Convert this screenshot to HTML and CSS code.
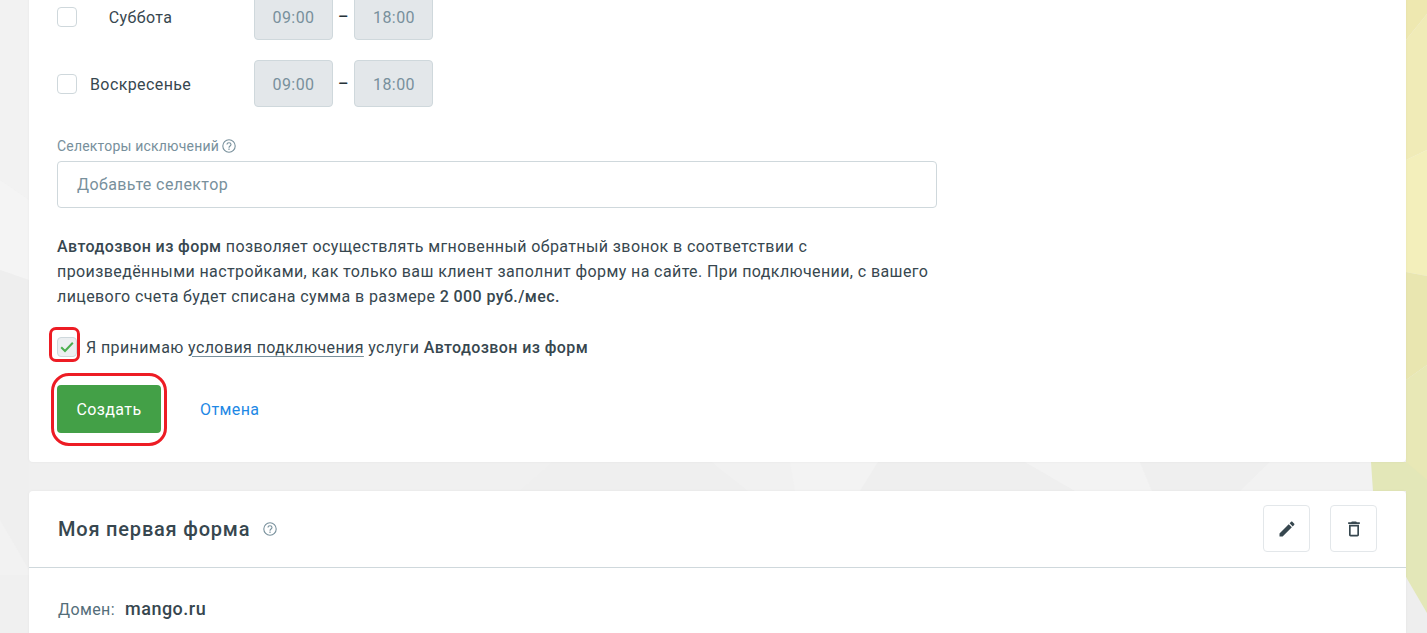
FILE: index.html
```html
<!DOCTYPE html>
<html lang="ru">
<head>
<meta charset="utf-8">
<title>Автодозвон из форм</title>
<link rel="stylesheet" href="styles.css">
</head>
<body>
<svg class="backdrop" viewBox="0 0 1427 633" preserveAspectRatio="none" aria-hidden="true">
  <rect width="1427" height="633" fill="#f1f1f1"/>
  <polygon points="0,0 29,0 29,200 0,180" fill="#f2f2f2"/>
  <polygon points="0,180 29,200 29,280 0,270" fill="#f4f4f4"/>
  <polygon points="0,270 29,280 29,450 0,450" fill="#eeeeee"/>
  <polygon points="0,450 29,450 29,570 0,520" fill="#efefef"/>
  <polygon points="0,520 29,570 29,633 0,633" fill="#f2f2f2"/>
  <polygon points="0,575 29,575 29,633 0,633" fill="#f0f0f0"/>
  <polygon points="29,462 560,462 520,491 29,491" fill="#f0f0f0"/>
  <polygon points="553,462 712,462 748,491 520,491" fill="#efefef"/>
  <polygon points="712,462 790,462 795,491 748,491" fill="#f1f1f1"/>
  <polygon points="790,462 878,462 860,491 795,491" fill="#f3f3f3"/>
  <polygon points="878,462 1025,462 1075,491 860,491" fill="#efefef"/>
  <polygon points="1025,462 1140,462 1152,491 1075,491" fill="#f3f3f3"/>
  <polygon points="1140,462 1270,462 1240,491 1152,491" fill="#efefef"/>
  <polygon points="1270,462 1372,462 1372,491 1240,491" fill="#f2f2f2"/>
  <polygon points="1371,462 1427,462 1427,633 1406,577 1406,491 1373,491" fill="#e3e7b8"/>
  <polygon points="1406,0 1427,0 1427,14 1406,40" fill="#eee8b0"/>
  <polygon points="1406,40 1427,14 1427,150 1406,160" fill="#f0ebb7"/>
  <polygon points="1406,160 1427,150 1427,276 1406,272" fill="#f3efbb"/>
  <polygon points="1406,272 1427,276 1427,365 1406,380" fill="#e9e6b0"/>
  <polygon points="1406,380 1427,365 1427,480 1406,462" fill="#e8e8b6"/>
  <polygon points="1406,577 1427,613 1427,633 1406,633" fill="#eeeeee"/>
</svg>

<main class="page">
  <section class="card card-form">
    <div class="day-row">
      <span class="checkbox"></span>
      <span class="day-name">Суббота</span>
      <span class="time">09:00</span>
      <span class="dash">–</span>
      <span class="time">18:00</span>
    </div>
    <div class="day-row">
      <span class="checkbox"></span>
      <span class="day-name">Воскресенье</span>
      <span class="time">09:00</span>
      <span class="dash">–</span>
      <span class="time">18:00</span>
    </div>

    <div class="field">
      <div class="field-label">Селекторы исключений
        <svg class="help" viewBox="0 0 14 14" aria-hidden="true">
          <circle cx="7" cy="7" r="6.2"/>
          <path d="M5 5.6C5 4.4 5.9 3.7 7 3.7c1.1 0 2 .7 2 1.8 0 1.5-2 1.6-2 3.3"/>
          <path d="M7 9.6v1.3"/>
        </svg>
      </div>
      <div class="text-input">Добавьте селектор</div>
    </div>

    <p class="note"><b>Автодозвон из форм</b> позволяет осуществлять мгновенный обратный звонок в соответствии с произведёнными настройками, как только ваш клиент заполнит форму на сайте. При подключении, с вашего лицевого счета будет списана сумма в размере <b>2 000 руб./мес.</b></p>

    <div class="accept">
      <span class="checkbox checked">
        <svg viewBox="0 0 14 12" aria-hidden="true"><path d="M1.2 6.2 5 10 12.8 1.8"/></svg>
      </span>
      <span>Я принимаю <a class="terms">условия подключения</a> услуги <b>Автодозвон из форм</b></span>
      <i class="mark mark-check"></i>
    </div>

    <div class="actions">
      <button class="btn-create">Создать<i class="mark mark-btn"></i></button>
      <a class="cancel">Отмена</a>
    </div>
  </section>

  <section class="card card-item">
    <header class="item-head">
      <h2>Моя первая форма</h2>
      <svg class="help" viewBox="0 0 14 14" aria-hidden="true">
        <circle cx="7" cy="7" r="6.2"/>
        <path d="M5 5.6C5 4.4 5.9 3.7 7 3.7c1.1 0 2 .7 2 1.8 0 1.5-2 1.6-2 3.3"/>
        <path d="M7 9.6v1.3"/>
      </svg>
      <div class="item-tools">
        <button class="tool"><svg viewBox="0 0 24 24" aria-hidden="true"><path d="M3 17.25V21h3.75L17.81 9.94l-3.75-3.75L3 17.25zM20.71 7.04c.39-.39.39-1.02 0-1.41l-2.34-2.34c-.39-.39-1.02-.39-1.41 0l-1.83 1.83 3.75 3.75 1.83-1.83z"/></svg></button>
        <button class="tool"><svg viewBox="0 0 24 24" aria-hidden="true"><path d="M6 19c0 1.1.9 2 2 2h8c1.1 0 2-.9 2-2V7H6v12zM8 9h8v10H8V9zm7.5-5l-1-1h-5l-1 1H5v2h14V4z"/></svg></button>
      </div>
    </header>
    <div class="item-body">
      <span class="domain-label">Домен:</span>
      <span class="domain">mango.ru</span>
    </div>
  </section>
</main>
</body>
</html>
```

FILE: styles.css
```css
* {
  box-sizing: border-box;
}

html,
body {
  margin: 0;
  height: 633px;
  overflow: hidden;
}

body {
  position: relative;
  font-family: Roboto, "Liberation Sans", sans-serif;
  font-size: 16px;
  letter-spacing: 0.4px;
  color: #37474f;
  background: #f1f1f1;
}

.backdrop {
  position: absolute;
  inset: 0;
  width: 1427px;
  height: 633px;
}

.page {
  position: relative;
  display: flex;
  flex-direction: column;
  gap: 29px;
  height: 640px;
  margin-top: -7px;
  padding: 0 21px 0 29px;
  overflow: hidden;
}

.card {
  flex: none;
  background: #fff;
  border-radius: 4px;
  box-shadow: 0 0 3px rgba(0, 0, 0, 0.05);
}

.card-form {
  padding: 0 28px 29px;
}

.day-row {
  display: flex;
  align-items: center;
  height: 47px;
  margin-bottom: 20px;
}

.checkbox {
  flex: none;
  width: 20px;
  height: 20px;
  border: 1px solid #cfd8dc;
  border-radius: 4px;
  background: #fff;
}

.day-name {
  width: 101px;
  margin: 1px 62.5px 0 13px;
  text-align: center;
  white-space: nowrap;
}

.time {
  display: flex;
  align-items: center;
  justify-content: center;
  width: 79px;
  height: 47px;
  padding: 1px 0 0 1px;
  border: 1px solid #cfd8dc;
  border-radius: 4px;
  background: #e3e7ea;
  color: #78909c;
}

.dash {
  width: 21.5px;
  text-align: center;
  font-weight: 500;
  letter-spacing: 0;
  color: #263238;
}

.field {
  margin-top: 31px;
}

.field-label {
  display: flex;
  align-items: center;
  gap: 3px;
  height: 16px;
  margin-bottom: 7px;
  font-size: 14px;
  letter-spacing: 0.2px;
  color: #78909c;
}

.help {
  flex: none;
  width: 14px;
  height: 14px;
  fill: none;
  stroke: #78909c;
  stroke-width: 1.1;
}

.text-input {
  display: flex;
  align-items: center;
  width: 880px;
  height: 47px;
  padding-left: 19px;
  border: 1px solid #cfd8dc;
  border-radius: 4px;
  color: #78909c;
}

.note {
  width: 880px;
  margin: 26px 0 0;
  line-height: 25px;
}

.note b,
.accept b {
  font-weight: 500;
}

.accept {
  position: relative;
  display: flex;
  align-items: center;
  gap: 9px;
  height: 20px;
  margin-top: 28px;
}

.checked {
  display: flex;
  align-items: center;
  justify-content: center;
  background: #eceff1;
}

.checked svg {
  width: 14px;
  height: 12px;
  fill: none;
  stroke: #4caf50;
  stroke-width: 2;
}

.terms {
  text-decoration: underline;
  text-underline-offset: 3px;
  text-decoration-color: #78909c;
}

.actions {
  display: flex;
  align-items: center;
  gap: 39px;
  margin-top: 28px;
}

.btn-create {
  position: relative;
  width: 104px;
  height: 48px;
  border: 0;
  border-radius: 4px;
  background: #43a047;
  color: #fff;
  font: inherit;
  letter-spacing: inherit;
}

.cancel {
  color: #1e88e5;
}

.mark {
  position: absolute;
  border: 3px solid #ed1c24;
  border-radius: 7px;
}

.mark-check {
  left: -8px;
  top: -10px;
  width: 31px;
  height: 35px;
}

.mark-btn {
  left: -6px;
  top: -12px;
  width: 116px;
  height: 73px;
  border-radius: 18px;
}

.item-head {
  display: flex;
  align-items: center;
  gap: 13px;
  height: 77px;
  padding: 0 29px 1px;
  border-bottom: 1px solid #cfd8dc;
}

.item-head h2 {
  margin: 0;
  font-size: 20px;
  font-weight: 500;
  letter-spacing: 0.8px;
}

.item-tools {
  display: flex;
  gap: 20px;
  margin-left: auto;
}

.tool {
  display: flex;
  align-items: center;
  justify-content: center;
  width: 47px;
  height: 47px;
  padding: 0;
  border: 1px solid #e3e7ea;
  border-radius: 4px;
  background: #fff;
}

.tool svg {
  width: 20px;
  height: 20px;
  fill: #37474f;
}

.item-body {
  display: flex;
  align-items: baseline;
  gap: 10px;
  height: 200px;
  padding: 30px 29px 0;
}

.domain-label {
  color: #546e7a;
}

.domain {
  font-size: 18px;
  font-weight: 500;
  letter-spacing: 0.5px;
}
```
